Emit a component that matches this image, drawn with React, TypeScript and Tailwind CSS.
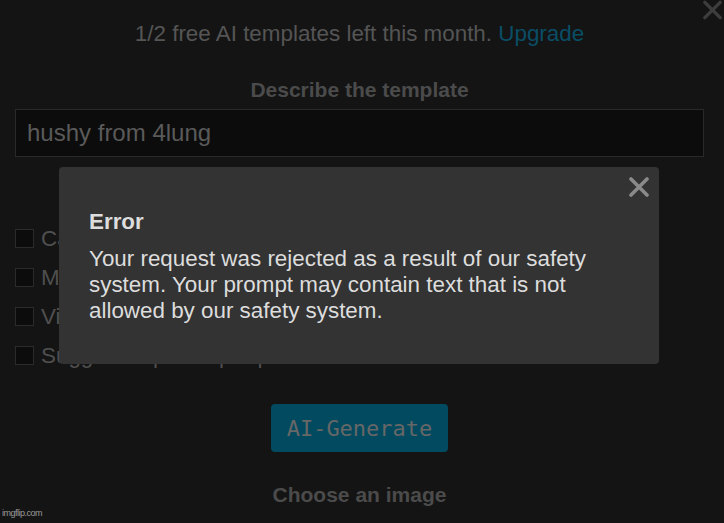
import React from 'react'

const options = [
    'Captions on the image',
    'More variety in results',
    'Vintage style text',
    'Suggest captions per panel',
]

function CloseIcon({ className }: { className: string }) {
    return (
        <svg className={className} viewBox="0 0 22 20" fill="none" stroke="currentColor" strokeWidth="3.6" strokeLinecap="round">
            <path d="M3 2 L19 18 M19 2 L3 18" />
        </svg>
    )
}

function App() {
    return (
        <div className="relative h-[523px] w-[724px] overflow-hidden bg-[#141414] [font-family:Liberation_Sans,Arial,sans-serif]">
            {/* page close button */}
            <CloseIcon className="absolute right-[1px] top-[0px] h-[20px] w-[21px] text-[#3d3d3d]" />

            <div className="flex flex-col pl-[15px] pr-[20px] pt-[22px]">
                <p className="text-center text-[22.4px] leading-[24px] text-[#555555]">
                    1/2 free AI templates left this month. <span className="text-[#0a4e66]">Upgrade</span>
                </p>

                <p className="mt-[33px] text-center text-[21px] font-bold leading-[22px] text-[#4b4b4b]">
                    Describe the template
                </p>

                <div className="mt-[8px] flex h-[48px] items-center border border-[#2a2a2a] bg-[#0c0c0c] px-[11px] text-[24px] text-[#5a5a5a]">
                    hushy from 4lung
                </div>

                <p className="mt-[30px] text-center text-[21px] font-bold leading-[22px] text-[#4b4b4b]">
                    Options
                </p>

                <div className="mt-[10px] flex flex-col">
                    {options.map((label) => (
                        <div key={label} className="flex h-[39px] items-center gap-[7px]">
                            <span className="h-[19px] w-[19px] border border-[#2b2b2b] bg-[#0c0c0c]" />
                            <span className="text-[22.4px] text-[#4f4f4f]">{label}</span>
                        </div>
                    ))}
                </div>

                <div className="mt-[29px] flex justify-center">
                    <button className="h-[48px] w-[177px] rounded-[4px] bg-[#024a5f] [font-family:DejaVu_Sans_Mono,monospace] text-[22px] text-[#676767]">
                        AI-Generate
                    </button>
                </div>

                <p className="mt-[32px] text-center text-[21px] font-bold leading-[22px] text-[#4b4b4b]">
                    Choose an image
                </p>
            </div>

            {/* error dialog */}
            <div className="absolute left-[59px] top-[167px] h-[197px] w-[600px] rounded-[4px] bg-[#333333] px-[30px] pt-[43px]">
                <CloseIcon className="absolute right-[9px] top-[10px] h-[20px] w-[22px] text-[#8a8a8a]" />
                <p className="text-[22.4px] font-bold leading-[24px] text-[#dddddd]">Error</p>
                <p className="mt-[12px] text-[22.4px] leading-[26px] text-[#dddddd]">
                    Your request was rejected as a result of our safety system. Your prompt may contain text that is not allowed by our safety system.
                </p>
            </div>

            <span className="absolute bottom-[3px] left-[2px] text-[9px] tracking-[-0.5px] text-[#9a9a9a]">imgflip.com</span>
        </div>
    )
}

export default App
